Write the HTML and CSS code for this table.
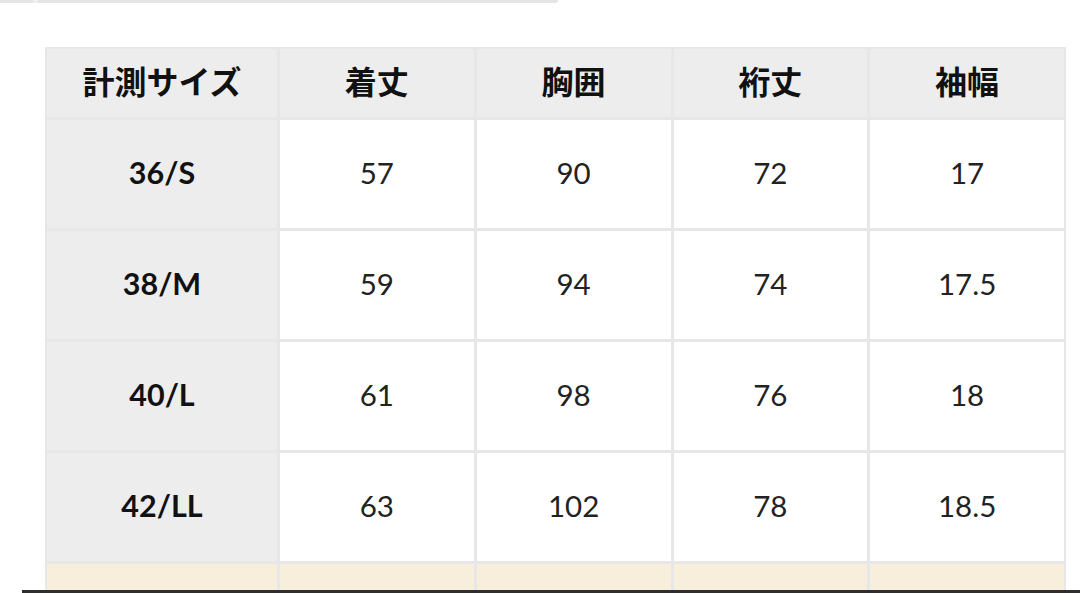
FILE: index.html
```html
<!DOCTYPE html>
<html lang="ja">
<head>
<meta charset="utf-8">
<link rel="stylesheet" href="styles.css">
</head>
<body>
<div class="topbar"><span class="topbar-notch"></span></div>
<div class="wrap">
  <div class="size-table">
    <div class="cell head">計測サイズ</div>
    <div class="cell head">着丈</div>
    <div class="cell head">胸囲</div>
    <div class="cell head">裄丈</div>
    <div class="cell head">袖幅</div>

    <div class="cell label">36/S</div>
    <div class="cell">57</div>
    <div class="cell">90</div>
    <div class="cell">72</div>
    <div class="cell">17</div>

    <div class="cell label">38/M</div>
    <div class="cell">59</div>
    <div class="cell">94</div>
    <div class="cell">74</div>
    <div class="cell">17.5</div>

    <div class="cell label">40/L</div>
    <div class="cell">61</div>
    <div class="cell">98</div>
    <div class="cell">76</div>
    <div class="cell">18</div>

    <div class="cell label">42/LL</div>
    <div class="cell">63</div>
    <div class="cell">102</div>
    <div class="cell">78</div>
    <div class="cell">18.5</div>

    <div class="cell note"></div>
    <div class="cell note"></div>
    <div class="cell note"></div>
    <div class="cell note"></div>
    <div class="cell note"></div>
  </div>
</div>
<div class="bottom-line"></div>
</body>
</html>
```

FILE: styles.css
```css
html, body {
  margin: 0;
  padding: 0;
  background: #ffffff;
  overflow: hidden;
  height: 593px;
}
body {
  font-family: "Lato", "Noto Sans CJK JP", sans-serif;
  color: #1a1a1a;
}
.topbar {
  width: 558px;
  height: 3px;
  background: #e4e4e4;
  border-bottom-right-radius: 3px;
  display: flex;
}
.topbar-notch {
  width: 5px;
  height: 3px;
  margin-left: 33px;
  background: #efefef;
}
.wrap {
  padding: 44px 0 0 45px;
}
.size-table {
  width: 1021px;
  box-sizing: border-box;
  display: grid;
  grid-template-columns: 230px repeat(4, 1fr);
  grid-template-rows: 68px repeat(4, 108px) 27px;
  gap: 3px;
  padding: 2px 2px 0 2px;
  background: #e7e7e9;
}
.cell {
  display: flex;
  align-items: center;
  justify-content: center;
  background: #ffffff;
  font-size: 29.5px;
  color: #222222;
  padding-bottom: 4px;
  box-sizing: border-box;
}
.head {
  background: #ededed;
  font-family: "Noto Sans CJK JP", sans-serif;
  font-weight: 700;
  font-size: 32px;
  color: #111111;
  padding-bottom: 7px;
}
.label {
  background: #ededed;
  font-weight: 700;
  font-size: 30.5px;
  color: #111111;
}
.note {
  background: #f8eedc;
  padding: 0;
}
.bottom-line {
  position: fixed;
  left: 22px;
  right: 0;
  bottom: 0;
  height: 3px;
  background: #2e2e2e;
}
```
